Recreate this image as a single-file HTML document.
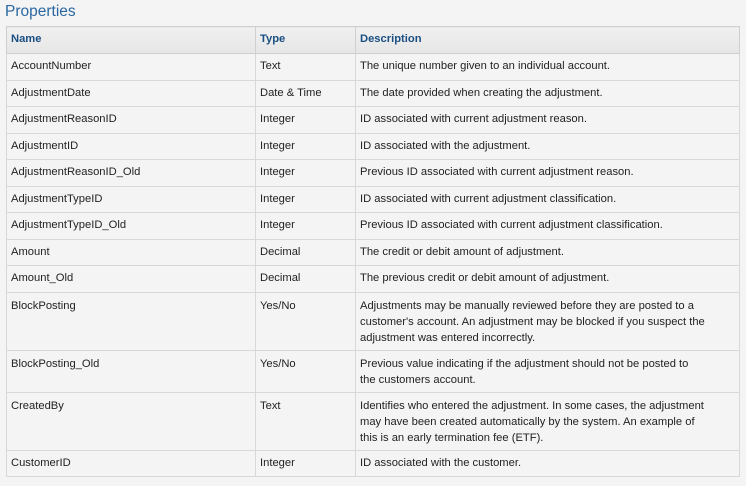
<!DOCTYPE html>
<html><head><style>
body{margin:0;background:#f4f4f4;width:746px;height:486px;overflow:hidden;font-family:"Liberation Sans",sans-serif;}
h1{position:absolute;left:5px;top:3px;margin:0;font-weight:normal;font-size:15.5px;color:#2a67a0;}
table{position:absolute;left:6px;top:26px;border-collapse:collapse;width:734px;table-layout:fixed;font-size:11.2px;color:#222;}
td,th{border:1px solid #d8d8d8;padding:0 4px;vertical-align:top;text-align:left;line-height:15.5px;}
th{background:linear-gradient(#f0f0f0,#e6e6e6);color:#1b4f82;font-weight:bold;height:26px;vertical-align:middle;border-color:#cfcfcf;}
td{padding-top:5px;padding-bottom:5px;}
tr.m td{padding-top:5px;padding-bottom:4px;line-height:16px;}
</style></head><body>
<h1>Properties</h1>
<table>
<colgroup><col style="width:249px"><col style="width:100px"><col></colgroup>
<tr><th>Name</th><th>Type</th><th>Description</th></tr>
<tr><td>AccountNumber</td><td>Text</td><td>The unique number given to an individual account.</td></tr>
<tr><td>AdjustmentDate</td><td>Date &amp; Time</td><td>The date provided when creating the adjustment.</td></tr>
<tr><td>AdjustmentReasonID</td><td>Integer</td><td>ID associated with current adjustment reason.</td></tr>
<tr><td>AdjustmentID</td><td>Integer</td><td>ID associated with the adjustment.</td></tr>
<tr><td>AdjustmentReasonID_Old</td><td>Integer</td><td>Previous ID associated with current adjustment reason.</td></tr>
<tr><td>AdjustmentTypeID</td><td>Integer</td><td>ID associated with current adjustment classification.</td></tr>
<tr><td>AdjustmentTypeID_Old</td><td>Integer</td><td>Previous ID associated with current adjustment classification.</td></tr>
<tr><td>Amount</td><td>Decimal</td><td>The credit or debit amount of adjustment.</td></tr>
<tr><td>Amount_Old</td><td>Decimal</td><td>The previous credit or debit amount of adjustment.</td></tr>
<tr class="m"><td>BlockPosting</td><td>Yes/No</td><td>Adjustments may be manually reviewed before they are posted to a<br>customer's account. An adjustment may be blocked if you suspect the<br>adjustment was entered incorrectly.</td></tr>
<tr class="m"><td>BlockPosting_Old</td><td>Yes/No</td><td>Previous value indicating if the adjustment should not be posted to<br>the customers account.</td></tr>
<tr class="m"><td>CreatedBy</td><td>Text</td><td>Identifies who entered the adjustment. In some cases, the adjustment<br>may have been created automatically by the system. An example of<br>this is an early termination fee (ETF).</td></tr>
<tr><td>CustomerID</td><td>Integer</td><td>ID associated with the customer.</td></tr>
</table>
</body></html>
